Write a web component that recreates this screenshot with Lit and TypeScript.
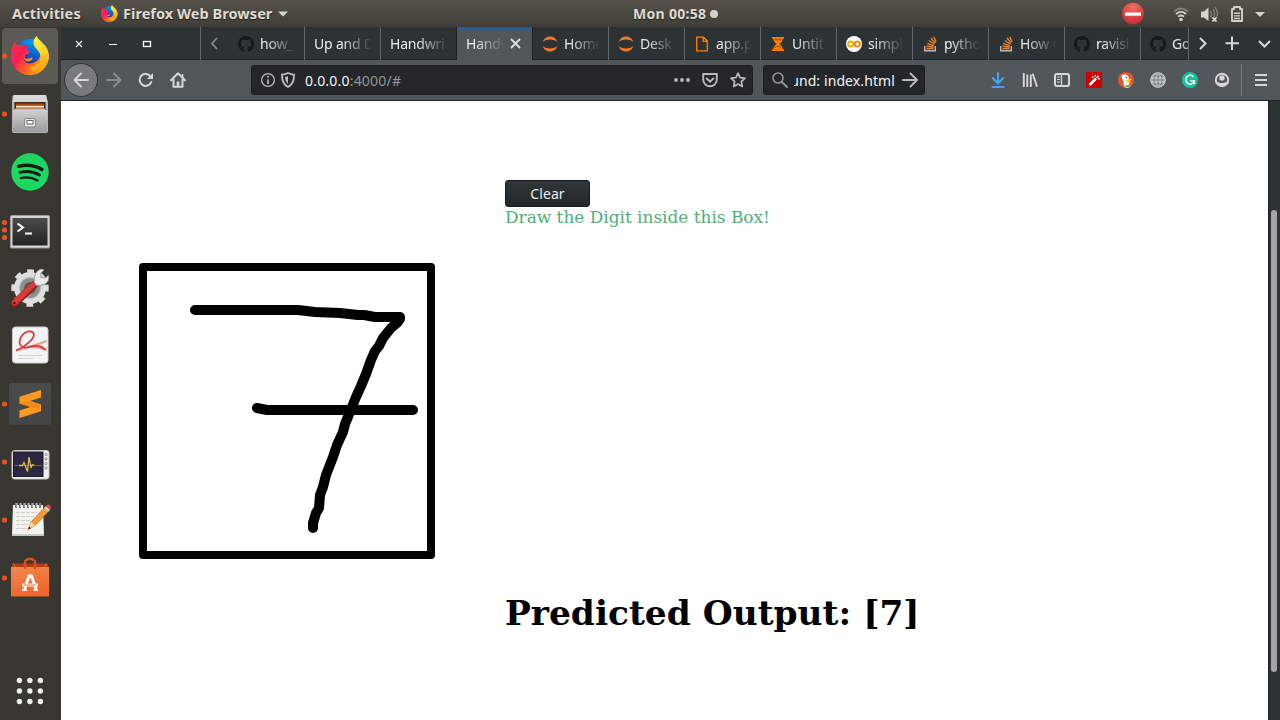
import { LitElement, html, css, svg, nothing } from "lit";
import { customElement, property } from "lit/decorators.js";
import { classMap } from "lit/directives/class-map.js";

const glyph = (w: number, h: number, body: unknown, box = `0 0 ${w} ${h}`) =>
  html`<svg class="glyph" width=${w} height=${h} viewBox=${box}>${body}</svg>`;

const glyphStyles = css`.glyph { display: block; flex: none; }`;

const firefox = svg`
  <defs>
    <linearGradient id="fxr" x1="0" y1="0.2" x2="1" y2="0.8">
      <stop offset="0" stop-color="#ff2a50"/><stop offset=".28" stop-color="#fb1e55"/>
      <stop offset=".6" stop-color="#ff6b1c"/><stop offset="1" stop-color="#ffbd16"/>
    </linearGradient>
    <linearGradient id="fxy" x1=".4" y1="0" x2=".6" y2="1">
      <stop offset="0" stop-color="#fff44f"/><stop offset=".5" stop-color="#ffd128"/><stop offset="1" stop-color="#ff9410"/>
    </linearGradient>
    <linearGradient id="fxb" x1=".7" y1="0" x2=".3" y2="1">
      <stop offset="0" stop-color="#00a7f5"/><stop offset=".5" stop-color="#0764d6"/><stop offset="1" stop-color="#2b1b86"/>
    </linearGradient>
  </defs>
  <circle cx="19.500" cy="17" r="14" fill="url(#fxb)"/>
  <path d="M4 5 C4 7 5 8 6 9.500 C8 8.500 10 8.500 12 9 L17.500 9.500 C16 11 15.500 12.500 15.500 13.500 C16 15 18 14.500 19 15.500 C18.500 18 15 18 14 19.500 C14 22 14.500 23 13 24.500 C16 28.500 22 28.500 27 24 C30 20 30 16 28 11 C33 12 37 15 38 19 C38 30 30 39 19 39 C8 39 0 31 0 20 C0 14 2 9 4 5 Z" fill="url(#fxr)"/>
  <path d="M25.500 0 C27 5 37.500 8 38 20 C38 27 33 34 26 36 C21 36 19 33 19 31 C26 31 30 26 29.500 20 C29 14 22 12 22.500 6 C23 3 24 1.500 25.500 0 Z" fill="url(#fxy)"/>
  <path d="M13 22 C17 24 18 21.500 21 21.500 C22 22.500 21.500 23.500 20 24.500 C17 26.500 14 25.500 13 22Z" fill="#ff8a16"/>`;

const dockArt: Record<string, unknown> = {
  firefox: svg`<rect x="2" y="1" width="56" height="56" rx="4" fill="#5c5a55"/><g transform="translate(11,9)">${firefox}</g>`,
  files: svg`
    <defs><linearGradient id="cab" x1="0" y1="0" x2="0" y2="1"><stop offset="0" stop-color="#d0d0d0"/><stop offset="1" stop-color="#9a9a9a"/></linearGradient></defs>
    <path d="M14 10H46L48 18V46Q48 48 46 48H14Q12 48 12 46V18L12.500 11Z" fill="#b5b5b5"/>
    <path d="M14 10H46L47.500 17H12.500Z" fill="#d8d8d8"/>
    <rect x="14.500" y="17" width="31" height="8.500" fill="#42221a"/>
    <rect x="16" y="18.500" width="28" height="2" fill="#a94b18"/><rect x="16" y="20.500" width="28" height="3" fill="#f59240"/><rect x="16" y="21" width="28" height="1" fill="#ffe8cc"/><rect x="15" y="23.500" width="30" height="1.500" fill="#d9b89b"/>
    <rect x="13" y="25" width="34" height="22" rx="1" fill="url(#cab)"/>
    <rect x="24.500" y="33.500" width="11" height="8.500" rx="1.500" fill="#e6e6e6" stroke="#858585"/><rect x="27" y="35.500" width="6" height="3.500" fill="#fafafa" stroke="#666"/>`,
  spotify: svg`<circle cx="30" cy="29" r="18.700" fill="#1ed760"/>
    <g fill="none" stroke="#141a16" stroke-linecap="round"><path d="M18.500 23.300Q31 20 42 26.500" stroke-width="3.400"/><path d="M20 29.300Q30.500 26.800 39.500 32" stroke-width="2.800"/><path d="M20.800 35Q30 33 37.500 37.400" stroke-width="2.300"/></g>`,
  terminal: svg`
    <defs><linearGradient id="trm" x1="0" y1="0" x2="0" y2="1"><stop offset="0" stop-color="#4b4b4b"/><stop offset="1" stop-color="#242424"/></linearGradient></defs>
    <rect x="10.500" y="14.500" width="39" height="32.500" rx="1" fill="#d4d4d4" stroke="#9c9c9c"/><rect x="12.500" y="17" width="35" height="27.500" fill="url(#trm)"/>
    <path d="M17.500 22.500L23 26.500L17.500 30.500" stroke="#fff" stroke-width="2" fill="none"/><path d="M25 32.500H32" stroke="#fff" stroke-width="2"/>`,
  settings: svg`
    <circle cx="30" cy="29" r="12.500" fill="none" stroke="#dedede" stroke-width="7"/>
    <circle cx="30" cy="29" r="15.800" fill="none" stroke="#dedede" stroke-width="6" stroke-dasharray="6.200 6.200" transform="rotate(-11 30 29)"/>
    <circle cx="30" cy="29" r="10.500" fill="#8e8e8c"/><circle cx="30" cy="29" r="6" fill="#5b5a56"/><circle cx="30" cy="29" r="10.500" fill="none" stroke="#bcbcbc"/>
    <path d="M14.500 44.500L34 26" stroke="#881f1f" stroke-width="7.500" stroke-linecap="round"/><path d="M14.500 43.800L33.500 25.600" stroke="#d83b38" stroke-width="5.500" stroke-linecap="round"/>
    <circle cx="14.500" cy="44" r="1.300" fill="#501515"/>
    <path d="M34 23Q34 15 38 11.500Q42 9 44 11L40.500 14.500L41 18.500L45.500 19L48.500 16Q50 23 44 25.500Q40 27 36.500 26.500Z" fill="#e9e9e9" stroke="#888" stroke-width=".8"/>`,
  reader: svg`<rect x="12.500" y="10" width="35.500" height="36" rx="3" fill="#f4f4f4" stroke="#d0d0d0"/>
    <path d="M16 33.500Q34 29 46.500 24M27 30Q38 29 46 33" fill="none" stroke="#ee9a9a" stroke-width="2.300"/>
    <path d="M16 33.500C25 30 34 22 34 17.500C33 12.500 25 13.500 21 20C17 28 22 32 29 30C36 28 42 29 46 33" fill="none" stroke="#d8383c" stroke-width="1.700"/>
    <path d="M18 38.500H42M18 41.500H33" stroke="#d3d3d3"/>`,
  sublime: svg`<defs><linearGradient id="sub" x1="0" y1="0" x2="0" y2="1"><stop offset="0" stop-color="#4b4b4b"/><stop offset="1" stop-color="#434446"/></linearGradient></defs>
    <rect x="9" y="8" width="42" height="42" rx="2.500" fill="url(#sub)"/>
    <path d="M19.500 21.800L41 15V22.500L30 26L41 29.500V36.200L19.500 43V35.500L30.500 32L19.500 28.500Z" fill="#ff9a1f"/><path d="M19.500 28.500L25 27.200L30 26L41 29.500L38 34L30.500 32Z" fill="#f08a12"/>`,
  monitor: svg`<rect x="12" y="17.500" width="37" height="28.500" rx="2.500" fill="#f0f0f0" stroke="#c6c6c6"/><rect x="13.500" y="19" width="29.500" height="24.500" fill="#2e2744" stroke="#1b1828"/>
    <path d="M14.500 32.500H42" stroke="#74663a"/><path d="M19 32.500H22.500L24 29.500L27.500 38.500L29 24L31 35L32 32H34" stroke="#d3c445" stroke-width="1.300" fill="none"/>
    <g fill="none" stroke="#9a9a9a"><circle cx="46" cy="21.500" r="1.200"/><circle cx="46" cy="26" r="1.200"/><circle cx="46" cy="30.500" r="1.200"/><circle cx="46" cy="35" r="1.200"/></g>`,
  notes: svg`<path d="M13 14H43L44 44H12Z" fill="#f2f2ef"/><path d="M12 43H44V45H12Z" fill="#c7c7c4"/>
    <path d="M16 12V17M20 12V17M24 12V17M28 12V17M32 12V17M36 12V17M40 12V17" stroke="#777" stroke-width="2"/><path d="M17 12V16M21 12V16M25 12V16M29 12V16M33 12V16M37 12V16" stroke="#ddd"/>
    <path d="M16 21.500H37M16 25.500H34M16 29.500H31M16 33.500H28M16 37.500H27" stroke="#cdcdca" stroke-dasharray="4 1"/>
    <path d="M28 38.500L31 31L45.500 15.500L49.500 19.500L35 34.500Z" fill="#f39b3b" stroke="#b86114" stroke-width=".7"/><path d="M28 38.500L31 31L35 34.500Z" fill="#f2d6ab"/><path d="M28 38.500L29.200 35.500L31 37.300Z" fill="#222"/>
    <path d="M44 17L46 15L50 18.500L48 21Z" fill="#c9c9c9"/><path d="M46 15Q48.500 12.500 50.500 14.500Q52 16.500 50 18.500Z" fill="#e33f49"/>`,
  software: svg`<defs><linearGradient id="bag" x1="0" y1="0" x2=".3" y2="1"><stop offset="0" stop-color="#ee8a4e"/><stop offset="1" stop-color="#f0662c"/></linearGradient></defs>
    <path d="M13 14.500H47L49 18H11Z" fill="#b53a14"/><path d="M13.500 14.500L15 18M46.500 14.500L45 18" stroke="#e36a3d"/><path d="M25 20V13Q25 11.500 26.500 11L28 10H32L33.500 11Q35 11.500 35 13V20" fill="none" stroke="#d94f20" stroke-width="2.500"/>
    <rect x="11" y="18" width="38" height="29.500" fill="url(#bag)"/><path d="M25 15V20M35 15V20" stroke="#d94f20" stroke-width="2.500"/>
    <path d="M24.500 40L29 27H31.500L36 40" fill="none" stroke="#fff" stroke-width="3"/><path d="M22 36H38" stroke="#fff" stroke-width="2.800"/><path d="M23.500 36H36" stroke="#ee7438"/><path d="M22 41H27M33.500 41H38" stroke="#fff" stroke-width="2"/>`,
};

const github = glyph(16, 16, svg`<path fill="#15181a" fill-rule="evenodd" d="M8 0C3.580 0 0 3.580 0 8c0 3.540 2.290 6.530 5.470 7.590.4.070.55-.17.55-.38 0-.19-.01-.82-.01-1.490-2.010.37-2.530-.49-2.690-.94-.09-.23-.48-.94-.82-1.130-.28-.15-.68-.52-.01-.53.63-.01 1.080.58 1.230.82.72 1.210 1.870.87 2.330.66.07-.52.28-.87.51-1.070-1.780-.2-3.640-.89-3.640-3.950 0-.87.31-1.590.82-2.150-.08-.2-.36-1.020.08-2.120 0 0 .67-.21 2.200.82.64-.18 1.320-.27 2-.27s1.360.09 2 .27c1.530-1.040 2.200-.82 2.200-.82.44 1.100.16 1.920.08 2.120.51.56.82 1.270.82 2.150 0 3.070-1.870 3.750-3.650 3.950.29.25.54.73.54 1.480 0 1.070-.01 1.930-.01 2.200 0 .21.15.46.55.38A8.010 8.010 0 0 0 16 8c0-4.420-3.580-8-8-8z"/>`);
const jupyter = glyph(16, 16, svg`<path d="M.6 5.800Q3 .4 8 .4T15.400 5.800Q12 3.400 8 3.400T.6 5.800ZM.6 10.200Q3 15.600 8 15.600T15.400 10.200Q12 12.600 8 12.600T.6 10.200Z" fill="#f37726"/>`);
const page = glyph(16, 16, svg`<path d="M2.700 1.200H9.500L13.300 5V14.800H2.700ZM9.200 1.200V5.300H13.300" fill="none" stroke="#ff7d00" stroke-width="1.300"/>`);
const hourglass = glyph(16, 16, svg`<path d="M2 1H14V2.700H2ZM2 13.300H14V15H2Z" fill="#ff7d00"/><path d="M3.300 2.500H12.700Q12.500 6 9.300 8Q12.500 10 12.700 13.500H3.300Q3.500 10 6.700 8Q3.500 6 3.300 2.500Z" fill="#ff7d00"/><path d="M5 11.800Q8 8.500 11 11.800M5 3.800H11" fill="none" stroke="#703600" stroke-width=".8"/>`);
const colab = glyph(16, 16, svg`<circle cx="8" cy="8" r="8" fill="#fff"/><circle cx="4.700" cy="8" r="2.600" fill="none" stroke="#f9ab00" stroke-width="2"/><circle cx="11.300" cy="8" r="2.600" fill="none" stroke="#f28d0c" stroke-width="2"/>`);
const stack = glyph(16, 16, svg`<path d="M2.700 10V14.800H13.300V10" fill="none" stroke="#bcbbbb" stroke-width="1.400"/><path d="M4.500 12.500H11.500M4.600 10L11.500 11.200M5.300 7.300L11.800 9.800M6.800 4.500L12.500 8.200M9 2L13 7.200M11.800 .8L14 6" stroke="#f47f24" stroke-width="1.350"/>`);

interface Tab { title: string; icon?: unknown; active?: boolean }
const tabs: Tab[] = [
  { title: "how_", icon: github }, { title: "Up and D" }, { title: "Handwri" },
  { title: "Handw", active: true }, { title: "Home", icon: jupyter }, { title: "Desk", icon: jupyter },
  { title: "app.p", icon: page }, { title: "Untit", icon: hourglass }, { title: "simpl", icon: colab },
  { title: "pytho", icon: stack }, { title: "How d", icon: stack }, { title: "ravisi", icon: github }, { title: "Goog", icon: github },
];

const L = "#d6d8d8";
const tools = {
  back: svg`<path d="M15 8H1.500M8 1.500L1.500 8L8 14.500" fill="none" stroke="${L}" stroke-width="2" stroke-linecap="round" stroke-linejoin="round"/>`,
  forward: svg`<path d="M1 8H14.500M8 1.500L14.500 8L8 14.500" fill="none" stroke="#888c8e" stroke-width="2" stroke-linecap="round" stroke-linejoin="round"/>`,
  reload: svg`<path d="M13.300 10A6 6 0 1 1 12.800 4.700" fill="none" stroke="${L}" stroke-width="2" stroke-linecap="round"/><path d="M15 1V7H9Z" fill="${L}"/>`,
  home: svg`<path d="M1 8.300L8 1.300L15 8.300M3.500 7.500V14.700H12.500V7.500" fill="none" stroke="${L}" stroke-width="2" stroke-linecap="round" stroke-linejoin="round"/><path d="M6.700 14V9.500H9.300V14Z" fill="${L}"/><path d="M12.500 2V5" stroke="${L}" stroke-width="1.500"/>`,
  info: svg`<circle cx="8" cy="8" r="6.400" fill="none" stroke="#b8babb" stroke-width="1.300"/><path d="M8 7.200V12" stroke="#b8babb" stroke-width="1.700"/><circle cx="8" cy="4.800" r="1" fill="#b8babb"/>`,
  shield: svg`<path d="M8 1Q11 2.500 14 2.700Q14.300 11.500 8 15Q1.700 11.500 2 2.700Q5 2.500 8 1Z" fill="none" stroke="#b8babb" stroke-width="1.900"/><path d="M8 4Q6.500 4.800 5 5Q5.200 9.700 8 11.800Z" fill="#b8babb"/>`,
  dots: svg`<g fill="#b8babb"><circle cx="2" cy="8" r="1.900"/><circle cx="8" cy="8" r="1.900"/><circle cx="14" cy="8" r="1.900"/></g>`,
  pocket: svg`<path d="M1.200 2H14.800V7.500A6.800 6.800 0 0 1 1.200 7.500Z" fill="none" stroke="#b8babb" stroke-width="1.900" stroke-linejoin="round"/><path d="M4.700 6.500L8 9.700L11.300 6.500" fill="none" stroke="#b8babb" stroke-width="2" stroke-linecap="round"/>`,
  star: svg`<path d="M8 1.200L10.100 5.600L15 6.200L11.400 9.500L12.300 14.500L8 12.100L3.700 14.500L4.600 9.500L1 6.200L5.900 5.600Z" fill="none" stroke="#b8babb" stroke-width="1.700" stroke-linejoin="round"/>`,
  search: svg`<circle cx="6" cy="6" r="5" fill="none" stroke="#8f9293" stroke-width="1.700"/><path d="M9.700 9.700L15 15" stroke="#8f9293" stroke-width="2" stroke-linecap="round"/>`,
  go: svg`<path d="M1 8H15M8.500 1.500L15 8L8.500 14.500" fill="none" stroke="#b8babb" stroke-width="1.900" stroke-linecap="round" stroke-linejoin="round"/>`,
  download: svg`<path d="M8 1V11M2.700 6L8 11.500L13.300 6M2.500 15H13.500" fill="none" stroke="#45a1ff" stroke-width="2" stroke-linecap="round"/>`,
  library: svg`<path d="M1.800 1V15M5.300 2.500V15M8.800 2.500V15M10.700 1.700L15 14.700" stroke="${L}" stroke-width="1.900"/>`,
  sidebar: svg`<rect x="1" y="2" width="14" height="12" rx="2" fill="none" stroke="${L}" stroke-width="2"/><path d="M7.500 2V14" stroke="${L}" stroke-width="1.300"/><path d="M3 5H6M3 7.500H6M3 10H6" stroke="${L}"/>`,
  wand: svg`<rect width="16" height="16" fill="#cc0000"/><path d="M3.500 13L10 6.500" stroke="#fff" stroke-width="2.600"/><path d="M10.500 6L12.700 3.800M9 3L9.500 4.500M12 6.500L14 7M6 4.500L7.500 5.500" stroke="#fff" stroke-width="1.500"/>`,
  duck: svg`<circle cx="8" cy="8" r="8" fill="#de5833"/><path d="M3.500 3.500Q7 1 10 4Q11.500 6 10.500 9L12 15Q8 16.500 6.200 14.500L4.700 7.500Q3.500 5.500 3.500 3.500Z" fill="#fff"/><path d="M8.500 8Q12 6 14 7.500L11 9.200L13.500 10.500Q10 11.500 8.500 9.500Z" fill="#fdd20a"/><path d="M7 13.500L12 12.500L11.500 15L7.500 15Z" fill="#53b948"/><circle cx="8.500" cy="5.500" r=".8" fill="#294f80"/>`,
  globe: svg`<circle cx="8" cy="8" r="7.500" fill="#c0c3c4"/><g fill="none" stroke="#70757a" stroke-width=".8"><path d="M8 .5V15.500M.5 8H15.500M2 4H14M2 12H14"/><ellipse cx="8" cy="8" rx="4" ry="7.500"/></g><circle cx="8" cy="8" r="7.300" fill="none" stroke="#d6d8d8" stroke-width=".8"/>`,
  grammar: svg`<circle cx="8" cy="8" r="8" fill="#15c39a"/><path d="M11.600 5A4.400 4.400 0 1 0 12.200 9.500M8.300 8.800H12.300V12" fill="none" stroke="#fff" stroke-width="1.500"/>`,
  account: svg`<circle cx="8" cy="8" r="6.200" fill="none" stroke="${L}" stroke-width="2"/><circle cx="8" cy="6" r="2.700" fill="${L}"/><path d="M3 9.500Q8 12.500 13 9.500Q12 14 8 14.500Q4 14 3 9.500Z" fill="${L}"/>`,
  menu: svg`<path d="M2 3H14M2 8H14M2 13H14" stroke="${L}" stroke-width="2"/>`,
};
const tool = (n: keyof typeof tools) => glyph(16, 16, tools[n]);

@customElement("system-bar")
class SystemBar extends LitElement {
  static styles = [glyphStyles, css`
    :host { display: grid; grid-template-columns: 633px auto 1fr; align-items: center; height: 27px; background: linear-gradient(#56524b, #403e39);
      color: #dfdbd2; font: bold 14px/27px "Noto Sans", sans-serif; text-shadow: 0 1px 1px #0008; }
    .left, .right { display: flex; align-items: center; }
    .left { padding-left: 12px; }
    .act { width: 89px; font-size: 14.500px; letter-spacing: .15px; }
    .app { padding-left: 5px; width: 155px; font-size: 14.500px; letter-spacing: .05px; }
    .clock { display: flex; align-items: center; gap: 4px; font-size: 14px; letter-spacing: .3px; }
    .dot { width: 8px; height: 8px; border-radius: 50%; background: #d5d2cb; }
    .right { justify-content: flex-end; padding-right: 15px; }
    .label { white-space: nowrap; }
  `];
  render() {
    return html`
      <div class="left"><span class="act label">Activities</span>${glyph(17, 17, firefox, "0 0 39 39")}
        <span class="app label">Firefox Web Browser</span>${glyph(10, 6, svg`<path d="M0 .5H10L5 5.500Z" fill="#d5d2cb"/>`)}</div>
      <div class="clock label">Mon 00:58<i class="dot"></i></div>
      <div class="right">${glyph(143, 26, svg`
        <defs><radialGradient id="stop" cx=".5" cy=".2" r=".9"><stop offset="0" stop-color="#f07060"/><stop offset="1" stop-color="#c3202e"/></radialGradient></defs>
        <circle cx="11" cy="12.500" r="10.800" fill="url(#stop)"/><rect x="3" y="11.500" width="16" height="3.200" fill="#fff"/>
        <g fill="none" stroke="#d5d2cb" stroke-width="1.700"><path d="M52 10.500Q59 4.500 66 10.500" stroke="#85827b"/><path d="M54 13Q59 8.700 64 13"/><path d="M56 15.700Q59 13.300 62 15.700"/></g><circle cx="59" cy="18.500" r="1.800" fill="#d5d2cb"/>
        <path d="M79 10.500H82L86.500 6.500V20L82 16.500H79Z" fill="#d5d2cb"/><path d="M88.500 10Q90.500 13 88.500 16.500M91 8Q94 13 91 18M93 6Q97 12 94.500 16" stroke="#85827b" fill="none" stroke-width="1.300"/><path d="M90.500 16.500L94.500 20.500M94.500 16.500L90.500 20.500" stroke="#e5e2db" stroke-width="1.700"/>
        <path d="M110 8H112V6H118V8H120V20H110Z" fill="none" stroke="#d5d2cb" stroke-width="1.900" stroke-linejoin="round"/><path d="M112 12.300H118M112 14.900H118M112 17.500H118" stroke="#d5d2cb" stroke-width="1.400"/>
        <path d="M133 11H143L138 16Z" fill="#d5d2cb"/>`)}</div>`;
  }
}

@customElement("app-dock")
class AppDock extends LitElement {
  static styles = [glyphStyles, css`
    :host { display: flex; flex-direction: column; justify-content: space-between; width: 61px; background: #383731; }
    .item { height: 58px; }
    .apps { height: 58px; }
  `];
  private marks: Record<string, number> = { firefox: 1, files: 1, terminal: 3, sublime: 1, monitor: 1, notes: 1, software: 1 };
  render() {
    return html`<div>${Object.entries(dockArt).map(([name, art]) => {
      const n = this.marks[name] ?? 0;
      return html`<div class="item">${glyph(61, 58, svg`${art}${Array.from({ length: n }, (_, i) =>
        svg`<circle cx="4.500" cy=${29 + (i - (n - 1) / 2) * 7.5} r="2.600" fill="#e95420"/>`)}`)}</div>`;
    })}</div>
    <div class="apps">${glyph(61, 58, [0, 1, 2].map(r => [0, 1, 2].map(c => svg`<circle cx=${19.4 + c * 10.5} cy=${18.5 + r * 10.5} r="2.700" fill="#f0f0ee"/>`)))}</div>`;
  }
}

@customElement("tab-strip")
class TabStrip extends LitElement {
  static styles = [glyphStyles, css`
    :host { display: flex; height: 33px; background: #2d3335; color: #eceeee; font: 14px/33px "Noto Sans", sans-serif; }
    .controls { width: 139px; height: 33px; border-right: 1px solid #63686a; }
    .controls, .prev, .end { box-shadow: inset 0 -1px #1c2021; }
    .prev { width: 28px; }
    .tabs { display: flex; width: 959px; overflow: hidden; border-right: 1px solid #63686a; }
    .tab { box-sizing: border-box; flex: 0 0 76px; min-width: 0; display: flex; align-items: center; gap: 6px; padding: 0 7px 0 9px; border-right: 1px solid #63686a; box-shadow: inset 0 -1px #1c2021; }
    .before { border-right-color: #1c2021; }
    .active { background: #50565a; box-shadow: inset 0 2px #215d9c; border-right-color: #1c2021; padding-right: 11px; gap: 4px; }
    .title { flex: 1; min-width: 0; overflow: hidden; white-space: nowrap; letter-spacing: -.2px; -webkit-mask-image: linear-gradient(90deg, #000 calc(100% - 32px), transparent calc(100% - 1px)); }
    .end { width: 91px; }
  `];
  render() {
    return html`
      <div class="controls">${glyph(139, 33, svg`<g fill="none" stroke="#eee" stroke-width="1.200"><path d="M15 14L21 20M21 14L15 20"/></g><path d="M48 17.500H56" stroke="#fff"/><rect x="82.500" y="14.500" width="7" height="5" fill="none" stroke="#fff" stroke-width="1.300"/>`)}</div>
      <div class="prev">${glyph(27, 33, svg`<path d="M16 11L11 16.500L16 22" fill="none" stroke="#888d8e" stroke-width="1.700"/>`)}</div>
      <div class="tabs">${tabs.map((t, i) => html`
        <div class=${classMap({ tab: true, active: !!t.active, before: !!tabs[i + 1]?.active })}>
          ${t.icon ?? nothing}<span class="title">${t.title}</span>
          ${t.active ? glyph(11, 11, svg`<path d="M1 1L10 10M10 1L1 10" stroke="#dedfdf" stroke-width="1.800"/>`) : nothing}
        </div>`)}</div>
      <div class="end">${glyph(91, 33, svg`<g fill="none" stroke="#d6d8d8" stroke-width="2"><path d="M11 11L16.500 16.500L11 22"/><path d="M43 9.500V23M36.500 16.200H50"/><path d="M70 14L75.500 19.500L81 14"/></g>`)}</div>`;
  }
}

@customElement("nav-bar")
class NavBar extends LitElement {
  static styles = [glyphStyles, css`
    :host { display: flex; align-items: center; box-sizing: border-box; height: 41px; border-bottom: 1px solid #1f2224; background: #50565a; font: 14px/28px "Noto Sans", sans-serif; }
    .back { box-sizing: border-box; width: 34px; height: 34px; margin-left: 3px; padding: 8px; border: 1px solid #303436; border-radius: 50%; background: #767a7b; }
    .nav { display: flex; gap: 16px; margin-left: 8px; }
    .field { box-sizing: border-box; display: flex; align-items: center; height: 30px; border: 1px solid #1b1e1f; border-radius: 3px; background: #23272a; color: #f3f4f4; }
    .url { width: 502px; margin-left: 65px; padding: 0 6px 0 8px; gap: 4px; }
    .address { flex: 1; padding: 1px 0 0 5px; letter-spacing: .2px; }
    .dim { color: #929698; }
    .acts { display: flex; gap: 12px; }
    .find { width: 162px; margin-left: 10px; padding: 0 6px 0 8px; }
    .query { display: flex; justify-content: flex-end; width: 101px; margin: 1px 7px 0 6px; overflow: hidden; white-space: nowrap; letter-spacing: .1px; }
    .tray { display: flex; gap: 16px; margin-left: 65px; }
    .menu { margin-left: 11px; padding: 8px 11px; border-left: 1px solid #74797b; }
  `];
  render() {
    return html`
      <div class="back">${tool("back")}</div>
      <div class="nav">${tool("forward")}${tool("reload")}${tool("home")}</div>
      <div class="field url">${tool("info")}${tool("shield")}
        <span class="address">0.0.0.0<span class="dim">:4000/#</span></span>
        <div class="acts">${tool("dots")}${tool("pocket")}${tool("star")}</div></div>
      <div class="field find">${tool("search")}<span class="query">und: index.html</span>${tool("go")}</div>
      <div class="tray">${(["download", "library", "sidebar", "wand", "duck", "globe", "grammar", "account"] as const).map(tool)}</div>
      <div class="menu">${tool("menu")}</div>`;
  }
}

@customElement("digit-page")
class DigitPage extends LitElement {
  @property() prediction = "[7]";
  static styles = [glyphStyles, css`
    :host { display: flex; flex: 1; min-height: 0; background: #fff; font-family: "DejaVu Serif", serif; overflow: hidden; }
    .page { flex: 1; display: flex; flex-direction: column; align-items: flex-start; padding-top: 79px; }
    .clear { box-sizing: border-box; width: 85px; height: 27px; margin-left: 444px; padding: 0; border: 1px solid #15191a; border-radius: 3px; background: linear-gradient(#303639, #23282a); color: #eceeee; font: 14px/25px "Noto Sans", sans-serif; letter-spacing: .1px; }
    .hint { margin-left: 444px; height: 21px; font-size: 16.930px; line-height: 21px; color: #4caf7a; white-space: nowrap; }
    .pad { margin: 35px 0 0 78px; }
    .result { margin: 32px 0 0 444px; font-size: 34.400px; line-height: 44px; font-weight: bold; color: #000; white-space: nowrap; }
    .bar { box-sizing: border-box; width: 12px; padding: 109px 3px 48px 2px; border-left: 1px solid #1c2224; background: #2d3335; }
    .thumb { height: 100%; border-radius: 3px; background: #a3a5a4; }
  `];
  render() {
    return html`
      <div class="page">
        <button class="clear">Clear</button>
        <div class="hint">Draw the Digit inside this Box!</div>
        <div class="pad">${glyph(296, 296, svg`
          <rect x="143" y="267" width="288" height="288" fill="none" stroke="#000" stroke-width="8" stroke-linejoin="round"/>
          <g fill="none" stroke="#000" stroke-width="10" stroke-linecap="round" stroke-linejoin="round">
            <path d="M195 310H298L315 312L340 313L358 315L364 315L375 317H400V319L397 323L391 328L383 338L379 346L375 351L371 360L366 374L361 386L356 397L350 412L345 424L343 432L337 445L333 457L326 475L323 487L320 495L319 508L316 513L313 523V528"/>
            <path d="M257 408L267 410H413"/>
          </g>`, "139 263 296 296")}</div>
        <div class="result">Predicted Output: ${this.prediction}</div>
      </div>
      <div class="bar"><div class="thumb"></div></div>`;
  }
}

@customElement("app-root")
class AppRoot extends LitElement {
  static styles = css`
    :host { display: flex; flex-direction: column; width: 1280px; height: 720px; overflow: hidden; }
    .desk { flex: 1; display: flex; min-height: 0; }
    .window { flex: 1; min-width: 0; display: flex; flex-direction: column; }
  `;
  render() {
    return html`<system-bar></system-bar>
      <div class="desk"><app-dock></app-dock>
        <div class="window"><tab-strip></tab-strip><nav-bar></nav-bar><digit-page></digit-page></div></div>`;
  }
}
